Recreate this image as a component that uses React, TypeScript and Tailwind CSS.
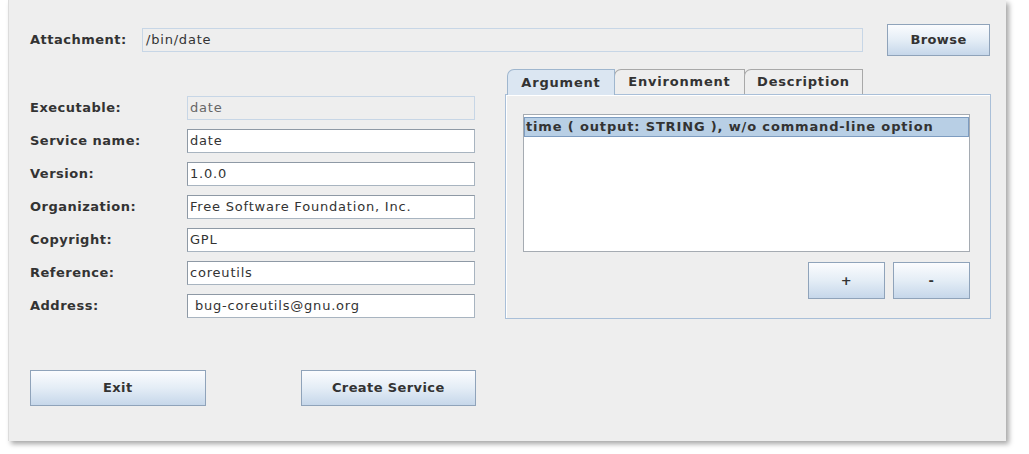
import React, { useState } from 'react'

const font = "font-['DejaVu_Sans',sans-serif]"

const btnCls = `flex items-center justify-center border border-[#8fa3ba] bg-gradient-to-b from-[#fbfcfe] via-[#e4edf6] to-[#c6d7ea] text-[#333] text-[13px] font-bold tracking-[0.4px] ${font}`

const fieldCls = `h-[24px] px-[2px] flex items-center border border-[#a8b4c0] border-t-[#8e99a5] border-l-[#8e99a5] text-[13px] tracking-[0.8px] text-[#333] ${font}`

const labelCls = 'text-[13px] font-bold tracking-[0.5px] text-[#333]'

type Row = { label: string; value: string; disabled?: boolean }

const rows: Row[] = [
    { label: 'Executable:', value: 'date', disabled: true },
    { label: 'Service name:', value: 'date' },
    { label: 'Version:', value: '1.0.0' },
    { label: 'Organization:', value: 'Free Software Foundation, Inc.' },
    { label: 'Copyright:', value: 'GPL' },
    { label: 'Reference:', value: 'coreutils' },
    { label: 'Address:', value: ' bug-coreutils@gnu.org' },
]

const tabs = ['Argument', 'Environment', 'Description']

const App: React.FC = () => {
    const [tab, setTab] = useState(0)

    return (
        <div className={`w-[1029px] h-[454px] bg-white ${font}`}>
            <div className="ml-[8px] w-[998px] h-[441px] bg-[#eeeeee] border-l border-[#dcdcdc] shadow-[3px_3px_5px_rgba(0,0,0,0.35)] pt-[24px] pl-[21px]">
                {/* attachment row */}
                <div className="flex items-center h-[32px]">
                    <span className={`w-[112px] ${labelCls}`}>Attachment:</span>
                    <div className="w-[721px] h-[24px] px-[3px] flex items-center border border-[#c7d6e6] text-[13px] tracking-[0.8px] text-[#333]">/bin/date</div>
                    <button className={`${btnCls} ml-[24px] w-[103px] h-[32px]`}>Browse</button>
                </div>

                <div className="flex">
                    {/* service fields */}
                    <div className="w-[446px] pt-[40px]">
                        <div className="flex flex-col gap-[9px]">
                            {rows.map(r => (
                                <div key={r.label} className="flex items-center">
                                    <span className={`w-[157px] ${labelCls}`}>{r.label}</span>
                                    <div className={`${fieldCls} w-[288px] whitespace-pre ${r.disabled ? 'bg-[#eeeeee] border-[#c7d6e6] border-t-[#c7d6e6] border-l-[#c7d6e6] text-[#666]' : 'bg-white'}`}>{r.value}</div>
                                </div>
                            ))}
                        </div>
                        <div className="flex mt-[52px]">
                            <button className={`${btnCls} w-[176px] h-[36px]`}>Exit</button>
                            <button className={`${btnCls} ml-[95px] w-[176px] h-[36px]`}>Create Service</button>
                        </div>
                    </div>

                    {/* tabbed panel */}
                    <div className="ml-[29px] pt-[13px]">
                        <div className="flex pl-[2px] h-[25px] items-end">
                            {tabs.map((t, i) => (
                                <div
                                    key={t}
                                    onClick={() => setTab(i)}
                                    className={`h-[25px] flex items-center justify-center border border-b-0 rounded-tl-[7px] text-[13px] font-bold tracking-[0.8px] text-[#333] ${i === tab ? 'bg-[#dbe6f2] border-[#9fb6ce] w-[108px] relative z-10 -mb-[1px] h-[26px]' : 'bg-[#eeeeee] border-[#a8a8a8] -ml-[1px]'} ${i === 1 ? 'w-[131px]' : ''} ${i === 2 ? 'w-[119px]' : ''}`}
                                >
                                    {t}
                                </div>
                            ))}
                        </div>
                        <div className="w-[486px] h-[225px] border border-[#a9bfd8] shadow-[inset_1px_1px_0_#ffffff] pt-[19px] pl-[17px]">
                            <div className="w-[447px] h-[138px] bg-white border border-[#a5abb2] pt-[2px]">
                                <div className="h-[20px] flex items-center px-[1px] bg-[#b8cfe5] border border-[#7d9cc0] text-[13px] font-bold tracking-[0.85px] text-[#333] whitespace-nowrap">
                                    time ( output: STRING ), w/o command-line option
                                </div>
                            </div>
                            <div className="flex justify-end w-[447px] mt-[10px] gap-[8px]">
                                <button className={`${btnCls} w-[77px] h-[37px]`}>+</button>
                                <button className={`${btnCls} w-[77px] h-[37px]`}>-</button>
                            </div>
                        </div>
                    </div>
                </div>
            </div>
        </div>
    )
}

export default App
